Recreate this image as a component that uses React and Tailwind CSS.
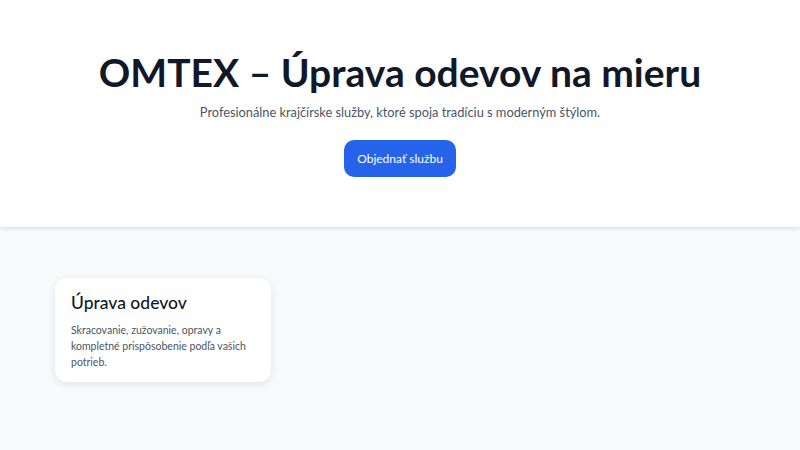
export default function App() {
  return (
    <div className="min-h-[450px] bg-[#f9fafb] font-['Lato',sans-serif]">
      <header className="bg-white pt-[53px] pb-[50px] text-center shadow-[0_2px_4px_rgba(0,0,0,0.1)]">
        <h1 className="text-[39px] leading-none font-bold text-[#111827]">OMTEX – Úprava odevov na mieru</h1>
        <p className="mt-[10px] text-[12.8px] leading-5 text-[#4b5563]">
          Profesionálne krajčírske služby, ktoré spoja tradíciu s moderným štýlom.
        </p>
        <div className="mt-[18px] flex justify-center">
          <button className="h-[37px] w-[112px] rounded-[10px] bg-[#2563eb] text-[12px] text-white">
            Objednať službu
          </button>
        </div>
      </header>
      <section className="px-[55px] pt-[51px] pb-12">
        <div className="grid grid-cols-3 gap-6">
          <div className="w-[216px] rounded-xl bg-white px-4 pt-4 pb-3 shadow-[0_2px_8px_rgba(0,0,0,0.1)]">
            <h2 className="text-[17.5px] leading-[18px] font-medium text-[#111827]">Úprava odevov</h2>
            <p className="mt-2.5 text-[10.5px] leading-4 text-[#4b5563]">
              Skracovanie, zužovanie, opravy a kompletné prispôsobenie podľa vašich potrieb.
            </p>
          </div>
        </div>
      </section>
    </div>
  )
}
